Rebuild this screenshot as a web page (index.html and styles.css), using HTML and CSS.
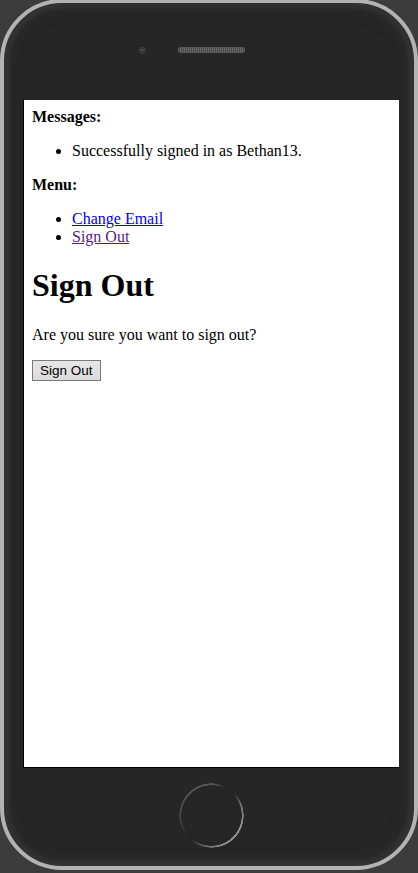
FILE: index.html
```html
<!DOCTYPE html>
<html>
<head>
<meta charset="utf-8">
<title>Sign Out</title>
<link rel="stylesheet" href="styles.css">
</head>
<body>
<div class="phone">
  <div class="phone-top">
    <div class="camera"></div>
    <div class="speaker"></div>
    <div></div>
  </div>
  <div class="screen">
    <div class="page">
      <b>Messages:</b>
      <ul>
        <li>Successfully signed in as Bethan13.</li>
      </ul>
      <b>Menu:</b>
      <ul>
        <li><a class="link" href="#">Change Email</a></li>
        <li><a class="link visited" href="#">Sign Out</a></li>
      </ul>
      <h1>Sign Out</h1>
      <p>Are you sure you want to sign out?</p>
      <form>
        <button type="button" class="btn">Sign Out</button>
      </form>
    </div>
  </div>
  <div class="phone-bottom">
    <div class="home"></div>
  </div>
</div>
</body>
</html>
```

FILE: styles.css
```css
html, body {
  margin: 0;
  padding: 0;
}
body {
  background: #3c3c3c;
  width: 418px;
  height: 873px;
  overflow: hidden;
}
.phone {
  box-sizing: border-box;
  width: 418px;
  height: 871px;
  margin-top: -1px;
  border: 4px solid #b3b3b3;
  border-radius: 62px;
  background: #262626;
  box-shadow: inset 0 0 3px 6px #313131, inset 0 0 10px 10px #2a2a2a;
  display: flex;
  flex-direction: column;
  padding: 0 15px 0 19px;
}
.phone-top {
  box-sizing: border-box;
  height: 97px;
  padding-top: 44px;
  display: grid;
  grid-template-columns: 1fr auto 1fr;
  align-items: start;
}
.camera {
  justify-self: end;
  margin-right: 32px;
  width: 7px;
  height: 7px;
  border-radius: 50%;
  background: radial-gradient(circle at 45% 45%, #62626e 0, #2c2c34 2px, #44444c 3px, #1e1e1e 4px);
}
.speaker {
  width: 67px;
  height: 6px;
  border-radius: 3px;
  background-color: #555;
  background-image: repeating-linear-gradient(90deg, #666 0 1px, #4a4a4a 1px 2px);
}
.screen {
  box-sizing: border-box;
  width: 376px;
  height: 668px;
  background: #fff;
  border-left: 1px solid #000;
  border-bottom: 1px solid #000;
  overflow: hidden;
}
.page {
  padding: 8px;
  font-family: "Liberation Serif", "Times New Roman", serif;
  font-size: 16px;
  color: #000;
}
.page ul {
  margin: 16px 0;
  padding-left: 40px;
}
.page h1 {
  font-size: 32px;
  margin: 21.44px 0;
}
.page p {
  margin: 16px 0;
}
.page form {
  margin: 0;
}
.link {
  color: #0000ee;
}
.link.visited {
  color: #551a8b;
}
.btn {
  font-family: "Liberation Sans", Arial, sans-serif;
  font-size: 13.5px;
  color: #000;
  height: 21px;
  padding: 1px 7px;
  background: linear-gradient(#e6e6e6, #dcdcdc);
  border: 1px solid #7a7a7a;
  border-radius: 0;
  margin: 0;
}
.phone-bottom {
  display: flex;
  justify-content: center;
  padding-top: 15px;
}
.home {
  width: 65px;
  height: 65px;
  border-radius: 50%;
  background: conic-gradient(#5a5a5a 0deg, #3e3e3e 15deg, #262626 25deg, #262626 48deg, #6e6e6e 68deg, #939393 115deg, #8a8a8a 165deg, #5a5a5a 198deg, #262626 220deg, #262626 232deg, #3e3e3e 255deg, #505050 295deg, #5a5a5a 360deg);
  -webkit-mask: radial-gradient(circle, transparent 30px, #000 30.5px, #000 32px, transparent 32.5px);
  mask: radial-gradient(circle, transparent 30px, #000 30.5px, #000 32px, transparent 32.5px);
}
```
